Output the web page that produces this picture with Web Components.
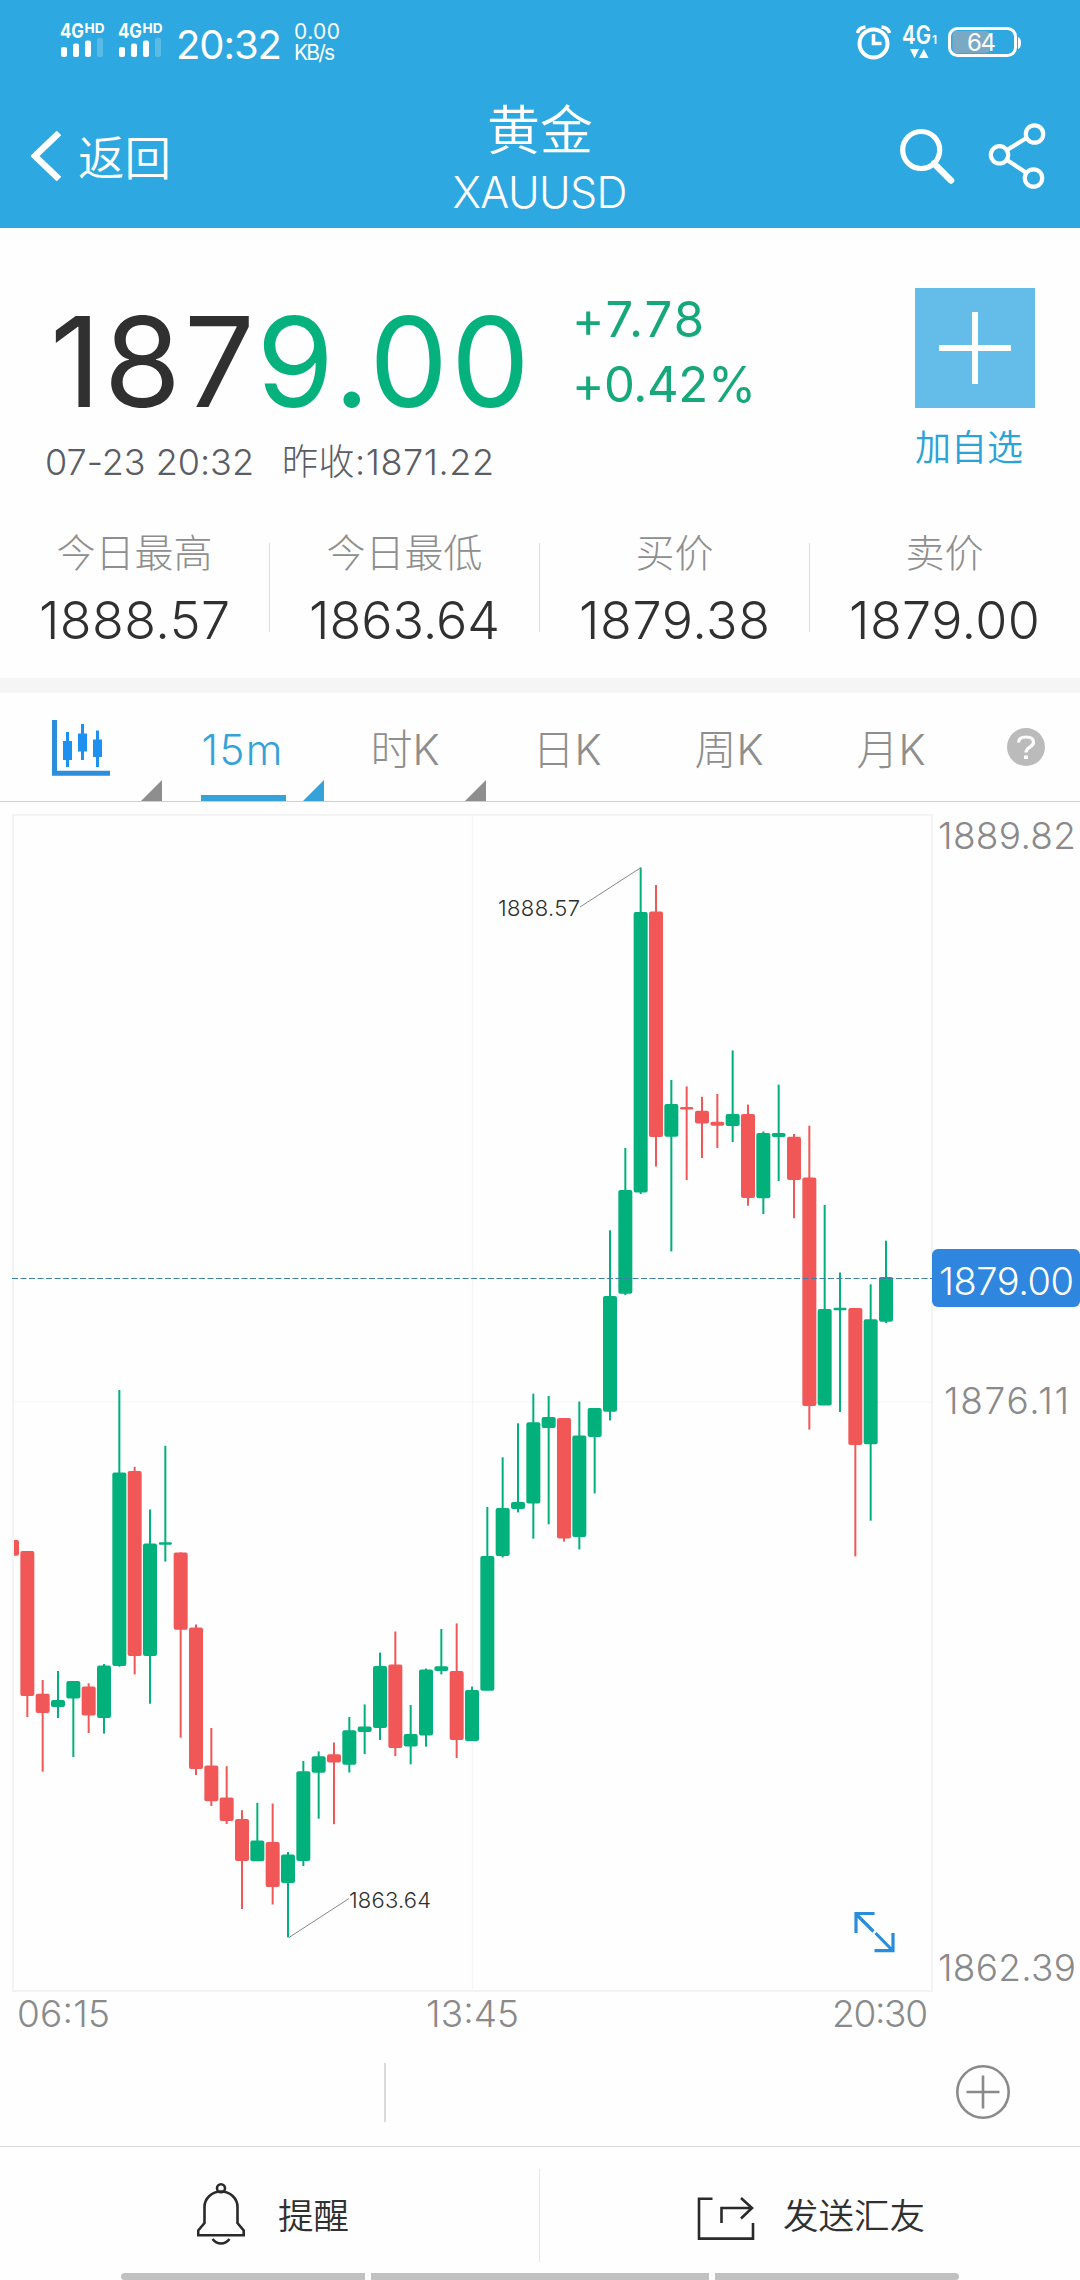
<!DOCTYPE html>
<html lang="zh-CN">
<head>
<meta charset="utf-8">
<title>黄金 XAUUSD</title>
<style>
  html, body { margin: 0; padding: 0; }
  body {
    width: 1080px;
    height: 2280px;
    overflow: hidden;
    background: #fefefe;
    color: #303030;
    font-family: Inter, "Noto Sans CJK SC", sans-serif;
    font-weight: 300;
  }
</style>
</head>
<body>
<quote-page></quote-page>

<script>
// One line of text, letter-spaced to the width given in px
class FitText extends HTMLElement {
  connectedCallback() {
    this.attachShadow({ mode: "open" });
    this.shadowRoot.innerHTML = `
      <style>
        :host { display: block; white-space: nowrap; }
        span { display: inline-block; }
      </style>
      <span><slot></slot></span>
    `;
    const width = Number(this.getAttribute("width"));
    const span = this.shadowRoot.querySelector("span");
    const count = this.textContent.length;
    const natural = span.getBoundingClientRect().width;
    this.style.width = width + "px";
    span.style.letterSpacing = (width - natural) / (count - 1) + "px";
  }
}
customElements.define("fit-text", FitText);

class SignalBars extends HTMLElement {
  constructor() {
    super();
    this.attachShadow({ mode: "open" });
    this.shadowRoot.innerHTML = `
      <style>
        :host { display: block; width: 45px; height: 36px; margin-right: 13px; }
        svg { display: block; overflow: visible; }
        text { font-family: Inter, sans-serif; font-weight: 700; fill: #fff; }
      </style>
      <svg width="45" height="36" viewBox="0 0 45 36" fill="#fff">
        <text x="0" y="15.500" font-size="20" textLength="24" lengthAdjust="spacingAndGlyphs">4G</text>
        <text x="24.500" y="10.500" font-size="13.500" textLength="20" lengthAdjust="spacingAndGlyphs">HD</text>
        <rect x="1" y="25" width="6" height="10" rx="2"/>
        <rect x="13" y="21.500" width="6" height="13.500" rx="2"/>
        <rect x="25" y="18.500" width="6" height="16.500" rx="2"/>
        <rect x="37" y="16" width="6" height="19" rx="2" opacity=".22"/>
      </svg>
    `;
  }
}
customElements.define("signal-bars", SignalBars);

class StatusBar extends HTMLElement {
  constructor() {
    super();
    this.attachShadow({ mode: "open" });
    this.shadowRoot.innerHTML = `
      <style>
        :host {
          display: flex;
          box-sizing: border-box;
          height: 86px;
          padding: 22px 60px 0;
          color: #fff;
          font-weight: 400;
        }
        .time { font-size: 40px; line-height: 45px; margin-right: 12px; }
        .speed { font-size: 21px; line-height: 20.5px; flex: 1; }
        svg { display: block; overflow: visible; }
        .right { margin-top: 1px; }
      </style>
      <signal-bars></signal-bars>
      <signal-bars></signal-bars>
      <fit-text class="time" width="106">20:32</fit-text>
      <div class="speed"><fit-text width="46">0.00</fit-text><fit-text width="41">KB/s</fit-text></div>
      <svg class="right" width="164" height="40" viewBox="856 23 164 40" fill="none" stroke="#fff">
        <circle cx="873.500" cy="43.500" r="14" stroke-width="4"/>
        <path d="M873.500 34v9.500h8" stroke-width="3.600"/>
        <path d="M857.500 33q1.500-5.500 8-6M889.500 33q-1.500-5.500-8-6" stroke-width="3.500"/>
        <g fill="#fff" stroke="none" font-family="Inter, sans-serif">
          <text x="902" y="44" font-size="25" font-weight="600" textLength="29" lengthAdjust="spacingAndGlyphs">4G</text>
          <text x="932" y="44" font-size="12" font-weight="600">1</text>
          <path d="M910 49h9l-4.500 9zM919 58h9.500l-4.700-9z"/>
          <path d="M1018 37q3 1 3 6t-3 6z"/>
        </g>
        <rect x="952.500" y="31" width="37" height="22" rx="4" fill="#7aa9c6" stroke="none"/>
        <rect x="949.500" y="28.500" width="66" height="27" rx="8" stroke-width="3"/>
        <text x="967" y="51" font-size="24" fill="#fff" stroke="none" font-family="Inter, sans-serif" textLength="29">64</text>
      </svg>
    `;
  }
}
customElements.define("status-bar", StatusBar);

class AppHeader extends HTMLElement {
  constructor() {
    super();
    this.attachShadow({ mode: "open" });
    this.shadowRoot.innerHTML = `
      <style>
        :host {
          display: grid;
          grid-template-columns: 1fr 300px 1fr;
          height: 142px;
          color: #fff;
        }
        .back { display: flex; padding: 45px 0 0 31px; gap: 16px; height: 50px; }
        .back span { font-size: 46.5px; line-height: 55px; font-weight: 350; }
        .title { display: flex; flex-direction: column; align-items: center; }
        .name { font-size: 53px; line-height: 60px; margin-top: 15px; font-weight: 350; }
        .code { font-size: 43px; line-height: 46px; margin-top: 8px; }
        .tools { display: flex; justify-content: flex-end; padding: 36px 33px 0 0; }
      </style>
      <div class="back">
        <svg width="31" height="50" viewBox="0 0 31 50"><path d="M28 2L4 25l24 23" fill="none" stroke="#fff" stroke-width="6.500"/></svg>
        <span>返回</span>
      </div>
      <div class="title">
        <span class="name">黄金</span>
        <fit-text class="code" width="175">XAUUSD</fit-text>
      </div>
      <div class="tools">
        <svg width="150" height="76" viewBox="897 122 150 76" fill="none" stroke="#fff">
          <circle cx="921.200" cy="150" r="18.500" stroke-width="5.200"/>
          <path d="M934 163.500l17 17" stroke-width="6.500" stroke-linecap="round"/>
          <g stroke-width="4.200">
            <circle cx="1034.500" cy="134" r="8.700"/>
            <circle cx="999.500" cy="154.800" r="8.700"/>
            <circle cx="1033.500" cy="178" r="8.700"/>
            <path d="M1007 150l19.500-12M1007 160l19 12.500"/>
          </g>
        </svg>
      </div>
    `;
  }
}
customElements.define("app-header", AppHeader);

class QuotePanel extends HTMLElement {
  constructor() {
    super();
    this.attachShadow({ mode: "open" });
    this.shadowRoot.innerHTML = `
      <style>
        :host {
          display: grid;
          grid-template-columns: 572px 1fr 165px;
          height: 292px;
        }
        .price { margin: 69px 0 0 50px; font-size: 125px; line-height: 130px; font-weight: 400; }
        .up { color: #05b17d; }
        .meta { display: flex; gap: 28px; margin: 13px 0 0 45px; font-size: 36px; line-height: 44px; color: #5a5c66; }
        .change { margin-top: 59px; font-size: 49px; line-height: 65px; font-weight: 400; color: #16a77b; }
        .add { margin-top: 60px; }
        .box { width: 120px; height: 120px; background: #63bde8; }
        .box svg { display: block; }
        .add p { margin: 19px 0 0; font-size: 36px; line-height: 42px; color: #2ba3d8; font-weight: 350; }
      </style>
      <div>
        <fit-text class="price" width="480">187<span class="up">9.00</span></fit-text>
        <div class="meta">
          <fit-text width="209">07-23 20:32</fit-text>
          <fit-text width="212">昨收:1871.22</fit-text>
        </div>
      </div>
      <div class="change">
        <fit-text width="132">+7.78</fit-text>
        <fit-text width="184">+0.42%</fit-text>
      </div>
      <div class="add">
        <div class="box">
          <svg width="120" height="120"><path d="M24 60h72M60 24v72" stroke="#fff" stroke-width="6"/></svg>
        </div>
        <p>加自选</p>
      </div>
    `;
  }
}
customElements.define("quote-panel", QuotePanel);

class StatCell extends HTMLElement {
  constructor() {
    super();
    this.attachShadow({ mode: "open" });
    this.shadowRoot.innerHTML = `
      <style>
        :host { display: flex; flex: 1; height: 158px; }
        .cell { flex: 1; display: flex; flex-direction: column; align-items: center; }
        .label { font-size: 39px; line-height: 44px; margin-top: 11px; color: #8e8e8e; }
        .value { font-size: 52px; line-height: 60px; margin-top: 16px; }
        .rule { width: 1px; height: 89px; margin-top: 23px; background: #dcdcdc; }
        :host([last]) .rule { background: none; }
      </style>
      <div class="cell">
        <span class="label"><slot></slot></span>
        <fit-text class="value" width="191">${this.getAttribute("value")}</fit-text>
      </div>
      <div class="rule"></div>
    `;
  }
}
customElements.define("stat-cell", StatCell);

class StatRow extends HTMLElement {
  constructor() {
    super();
    this.attachShadow({ mode: "open" });
    this.shadowRoot.innerHTML = `
      <style>
        :host { display: flex; border-bottom: 15px solid #f5f5f5; }
      </style>
      <stat-cell value="1888.57">今日最高</stat-cell>
      <stat-cell value="1863.64">今日最低</stat-cell>
      <stat-cell value="1879.38">买价</stat-cell>
      <stat-cell value="1879.00" last>卖价</stat-cell>
    `;
  }
}
customElements.define("stat-row", StatRow);

class PeriodTab extends HTMLElement {
  constructor() {
    super();
    this.attachShadow({ mode: "open" });
    this.shadowRoot.innerHTML = `
      <style>
        :host {
          display: flex;
          justify-content: center;
          position: relative;
          width: 162px;
          height: 108px;
          font-size: 42px;
          line-height: 113px;
          color: #8e8e8e;
        }
        :host([active]) { color: #35a3d9; }
        :host([active]) .name { box-shadow: inset 0 -6px #35a3d9; padding: 0 3px 0 1px; }
        .corner { position: absolute; right: 0; bottom: 0; display: none; }
        :host([more]) .corner { display: block; }
        .name { height: 108px; }
      </style>
      <div class="name"><slot></slot></div>
      <svg class="corner" width="21" height="21"><path d="M21 0v21H0z" fill="currentColor"/></svg>
    `;
  }
}
customElements.define("period-tab", PeriodTab);

class PeriodTabs extends HTMLElement {
  constructor() {
    super();
    this.attachShadow({ mode: "open" });
    this.shadowRoot.innerHTML = `
      <style>
        :host { display: flex; height: 108px; border-bottom: 1px solid #cfcfcf; }
        svg { display: block; }
        .kind { margin-top: 27px; }
        .help { flex: 1; display: flex; justify-content: center; padding-top: 35px; }
      </style>
      <period-tab more>
        <svg class="kind" width="58" height="58" viewBox="52 720 58 58">
          <path d="M54.500 720v53.200H110" fill="none" stroke="#2d8fdc" stroke-width="5"/>
          <g fill="#1e90f0">
            <path d="M66 732h3v35h-3zM63 741h9v19h-9z"/>
            <path d="M81 724h3v36h-3zM78 733.500h9v18h-9z"/>
            <path d="M96 730.500h3V767h-3zM93 739.500h9V757h-9z"/>
          </g>
        </svg>
      </period-tab>
      <period-tab active more><fit-text width="81">15m</fit-text></period-tab>
      <period-tab more>时K</period-tab>
      <period-tab>日K</period-tab>
      <period-tab>周K</period-tab>
      <period-tab>月K</period-tab>
      <div class="help">
        <svg width="38" height="38">
          <circle cx="19" cy="19" r="19" fill="#bbb"/>
          <path d="M11.500 14.500q0-5.500 7.500-5.500t7.500 5q0 3-4 5.300-3.500 2-3.500 5.200" fill="none" stroke="#fff" stroke-width="3.200"/>
          <rect x="17" y="27.500" width="4" height="3.500" fill="#fff"/>
        </svg>
      </div>
    `;
  }
}
customElements.define("period-tabs", PeriodTabs);

// direction, high, body top, body bottom, low
const CANDLES = [
  ["r", 1540, 1540, 1555.7, 1555],
  ["r", 1551, 1551, 1696, 1717],
  ["r", 1680, 1693.7, 1713, 1771.7],
  ["g", 1671, 1700, 1707, 1718],
  ["g", 1681, 1681, 1698.5, 1757],
  ["r", 1683.3, 1686.6, 1715.5, 1733],
  ["g", 1664, 1665.6, 1718, 1733.6],
  ["g", 1390, 1472.5, 1666, 1666.7],
  ["r", 1467, 1471, 1656, 1674.4],
  ["g", 1509.5, 1543.5, 1656, 1703.7],
  ["g", 1445.8, 1542.3, 1544.7, 1561.6],
  ["r", 1552.4, 1552.4, 1629.7, 1737.7],
  ["r", 1624.5, 1627.5, 1769, 1775],
  ["r", 1728, 1765.4, 1801.3, 1806],
  ["r", 1766.2, 1797.6, 1821, 1824],
  ["r", 1810.2, 1819, 1861, 1909],
  ["g", 1802.8, 1840.5, 1861.2, 1861],
  ["r", 1803.5, 1842, 1887, 1904.5],
  ["g", 1852, 1854.6, 1883, 1937.4],
  ["g", 1761, 1771.3, 1861, 1866],
  ["g", 1751.4, 1756.2, 1772.8, 1818.7],
  ["r", 1742.5, 1754.3, 1762.5, 1824.2],
  ["g", 1717, 1730.3, 1764.7, 1772.5],
  ["g", 1704.4, 1726.6, 1732.1, 1754],
  ["g", 1652.6, 1666, 1728, 1740],
  ["r", 1631.5, 1664.4, 1748, 1756.2],
  ["g", 1705, 1734, 1746.6, 1764.3],
  ["g", 1668.5, 1669.6, 1735.5, 1746.6],
  ["g", 1629, 1666.3, 1671.1, 1674.4],
  ["r", 1623.4, 1671.1, 1740, 1758],
  ["g", 1686.6, 1690, 1741, 1741],
  ["g", 1507, 1556, 1690.7, 1690],
  ["g", 1457.3, 1508, 1556, 1557.5],
  ["g", 1423.3, 1502, 1509, 1512.4],
  ["g", 1393.7, 1422.2, 1503.5, 1538.7],
  ["g", 1396, 1417, 1428, 1524.3],
  ["r", 1418.1, 1418.1, 1538.4, 1541.6],
  ["g", 1401.6, 1435.6, 1537, 1549.4],
  ["g", 1408, 1408, 1437, 1493.4],
  ["g", 1230.3, 1296, 1411.7, 1420.4],
  ["g", 1148, 1190, 1293.7, 1295],
  ["g", 867.6, 912, 1192.6, 1194],
  ["r", 885, 911.6, 1137, 1166.5],
  ["g", 1080, 1104, 1136.8, 1251.4],
  ["r", 1086.4, 1107, 1109.4, 1180],
  ["r", 1096.8, 1110.7, 1123.6, 1158],
  ["r", 1094, 1121.7, 1125.7, 1148],
  ["g", 1050.4, 1114, 1126, 1142],
  ["r", 1104.6, 1114, 1198, 1205.7],
  ["g", 1131.4, 1133, 1198.2, 1214],
  ["g", 1084.6, 1133, 1137, 1181],
  ["r", 1134, 1136.8, 1180, 1218.2],
  ["r", 1125.7, 1177.5, 1406, 1429.6],
  ["g", 1205, 1309, 1405.4, 1405],
  ["g", 1272.5, 1307.8, 1310.2, 1412],
  ["r", 1308, 1308, 1445, 1556.4],
  ["g", 1284.3, 1319.3, 1444.3, 1520.7],
  ["g", 1240.7, 1277, 1321.8, 1323]
];

class CandleChart extends HTMLElement {
  constructor() {
    super();
    this.attachShadow({ mode: "open" });
    const step = 46 / 3;
    const candles = CANDLES.map(([dir, high, top, bottom, low], i) => {
      const x = 12 + i * step;
      const h = bottom - top;
      const w = h < 3 ? 13 : 14;
      return `<g class="${dir}">
        <rect x="${x - 1}" y="${high}" width="2" height="${Math.max(low - high, 0)}"/>
        <rect x="${x - w / 2}" y="${top}" width="${w}" height="${h}" rx="${Math.min(2, h / 2)}"/>
      </g>`;
    }).join("");
    this.shadowRoot.innerHTML = `
      <style>
        :host { display: block; height: 1238px; }
        svg { display: block; }
        text { font-family: Inter, sans-serif; font-weight: 300; }
        .axis { font-size: 37px; fill: #8a8a8a; }
        .note { font-size: 22px; fill: #303030; }
        .now { font-size: 38px; fill: #fff; font-weight: 350; }
        .r { fill: #f25757; }
        .g { fill: #02b07c; }
      </style>
      <svg width="1080" height="1238" viewBox="0 802 1080 1238">
        <clipPath id="plot"><rect x="14" y="815" width="918" height="1176"/></clipPath>
        <path d="M472.500 815v1176M13 1402h919" stroke="#f5f5f5" stroke-width="1.200"/>
        <rect x="13" y="815" width="919" height="1176" fill="none" stroke="#f3f3f3" stroke-width="2"/>
        <g clip-path="url(#plot)">${candles}</g>
        <path d="M12 1278.500H932" stroke="#3d80ab" stroke-width="1.200" stroke-dasharray="6 2.500"/>
        <path d="M580 907l61-39.500M289 1937.500l60-39" stroke="#888" stroke-width="1"/>
        <text class="note" x="498" y="916" textLength="82">1888.57</text>
        <text class="note" x="349" y="1908" textLength="82">1863.64</text>
        <text class="axis" x="938" y="849" textLength="138">1889.82</text>
        <text class="axis" x="944" y="1414" textLength="125">1876.11</text>
        <text class="axis" x="938" y="1980.500" textLength="138">1862.39</text>
        <text class="axis" x="17" y="2026.500" textLength="93">06:15</text>
        <text class="axis" x="426" y="2026.500" textLength="93">13:45</text>
        <text class="axis" x="832" y="2026.500" textLength="96">20:30</text>
        <rect x="932" y="1249" width="148" height="58" rx="6" fill="#2e86de"/>
        <text class="now" x="939" y="1294.500" textLength="135">1879.00</text>
        <g fill="none" stroke="#2a8cdc" stroke-width="3.200">
          <path d="M856 1933v-19.500h18.500M856 1914l17.500 17.500"/>
          <path d="M874.500 1950.700H893V1933M893 1951l-17.500-18"/>
        </g>
      </svg>
    `;
  }
}
customElements.define("candle-chart", CandleChart);

class IndicatorRow extends HTMLElement {
  constructor() {
    super();
    this.attachShadow({ mode: "open" });
    this.shadowRoot.innerHTML = `
      <style>
        :host {
          display: flex;
          align-items: center;
          justify-content: space-between;
          box-sizing: border-box;
          height: 107px;
          padding: 0 70px 2px 384px;
          border-bottom: 1px solid #d9d9d9;
        }
        i { width: 2px; height: 59px; background: #dadada; }
      </style>
      <i></i>
      <svg width="54" height="56" viewBox="0 0 54 56" fill="none" stroke="#8a8a8a" stroke-width="2.600">
        <circle cx="27" cy="28" r="25.700"/>
        <path d="M10.500 28h33M27 11.500v33"/>
      </svg>
    `;
  }
}
customElements.define("indicator-row", IndicatorRow);

class ActionBar extends HTMLElement {
  constructor() {
    super();
    this.attachShadow({ mode: "open" });
    this.shadowRoot.innerHTML = `
      <style>
        :host { display: block; }
        .actions { display: flex; height: 126px; }
        .action {
          box-sizing: border-box;
          display: flex;
          width: 539px;
          padding: 36px 0 0 197px;
          font-size: 35.5px;
          line-height: 67px;
          font-weight: 350;
        }
        .action + .rule + .action { padding-left: 157px; }
        .rule { width: 1px; height: 93px; margin-top: 22px; background: #e6e6e6; }
        .nav { display: flex; gap: 6px; padding: 0 121px; }
        .nav i { height: 7px; flex: 244 0 0; background: #c1c1c1; }
        .nav i:nth-child(2) { flex-grow: 338; }
        .nav i:first-child { border-radius: 4px 0 0 4px; }
        .nav i:last-child { border-radius: 0 4px 4px 0; }
        svg { display: block; flex: none; }
      </style>
      <div class="actions">
        <div class="action">
          <svg width="81" height="64" viewBox="197 2183 81 64" fill="none" stroke="#2a2a2a" stroke-width="2.600">
            <circle cx="221" cy="2188.300" r="4"/>
            <path d="M204.500 2223v-16a16.500 15.500 0 0 1 33 0v16l6.200 7.500v4.800h-45.500v-4.800z"/>
            <path d="M212.500 2239q3.500 4.500 8.500 4.500t8.500-4.500"/>
          </svg>
          <span>提醒</span>
        </div>
        <div class="rule"></div>
        <div class="action">
          <svg width="86" height="64" viewBox="697 2183 86 64" fill="none" stroke="#2a2a2a" stroke-width="2.600">
            <path d="M712.500 2198.800h-13.500v39.800h54V2223M721.500 2223v-15h30.500M741 2198l11 10-11 10.500"/>
          </svg>
          <span>发送汇友</span>
        </div>
      </div>
      <div class="nav"><i></i><i></i><i></i></div>
    `;
  }
}
customElements.define("action-bar", ActionBar);

class QuotePage extends HTMLElement {
  constructor() {
    super();
    this.attachShadow({ mode: "open" });
    this.shadowRoot.innerHTML = `
      <style>
        :host { display: flex; flex-direction: column; width: 1080px; height: 2280px; }
        .top { background: #2da8e0; }
      </style>
      <div class="top">
        <status-bar></status-bar>
        <app-header></app-header>
      </div>
      <quote-panel></quote-panel>
      <stat-row></stat-row>
      <period-tabs></period-tabs>
      <candle-chart></candle-chart>
      <indicator-row></indicator-row>
      <action-bar></action-bar>
    `;
  }
}
customElements.define("quote-page", QuotePage);
</script>
</body>
</html>
